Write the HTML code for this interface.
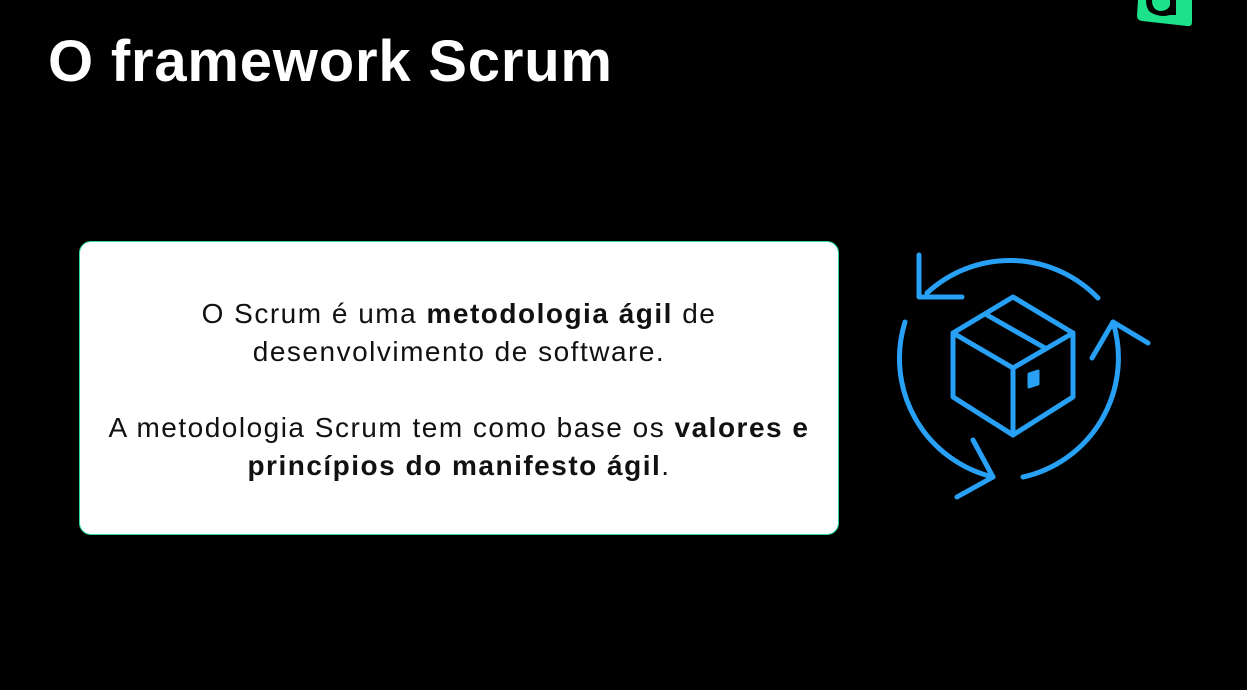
<!DOCTYPE html>
<html><head><meta charset="utf-8"><style>
html,body{margin:0;padding:0;background:#000;width:1247px;height:690px;overflow:hidden;position:relative;font-family:"Liberation Sans",sans-serif}
h1{position:absolute;left:48px;top:28px;margin:0;color:#fff;font-size:58px;font-weight:bold;letter-spacing:0.8px}
.box{position:absolute;left:79px;top:241px;width:760px;height:294px;background:#fff;border:1.5px solid #2fd9a0;border-radius:12px;box-sizing:border-box}
.t{position:absolute;left:0;width:100%;text-align:center;color:#111;font-size:28px;line-height:38px;letter-spacing:1.5px}
b{font-weight:bold}
</style></head><body>
<h1>O framework Scrum</h1>
<svg style="position:absolute;left:1130px;top:0" width="70" height="30" viewBox="0 0 70 30">
<path d="M8 0 L62 0 L62 22 Q62 27 57 26 L12 21 Q7 20 7 16 Z" fill="#1de28a"/>
<path d="M22 0 Q22 10 30 11 Q38 11 40 5 L40 0 L46 0 L46 15 L40 15 Q30 18 20 12 Q16 8 16 0 Z" fill="#000"/>
</svg>
<div class="box">
<div class="t" style="top:53px">O Scrum é uma <b>metodologia ágil</b> de<br>desenvolvimento de software.</div>
<div class="t" style="top:167px">A metodologia Scrum tem como base os <b>valores e<br>princípios do manifesto ágil</b>.</div>
</div>
<svg style="position:absolute;left:0;top:0" width="1247" height="690" fill="none" stroke="#27a0f5" stroke-width="5" stroke-linecap="round" stroke-linejoin="round">
<path d="M927 293 A122 122 0 0 1 1098 298"/>
<path d="M919 255 L919 297 L962 297"/>
<path d="M1113 322 A122 122 0 0 1 1023 477"/>
<path d="M1092 358 L1113 322 L1148 343"/>
<path d="M905 322 A122 122 0 0 0 993 477"/>
<path d="M973 440 L993 477 L957 497"/>
<path d="M1013 297 L953 333 L953 397 L1013 435 L1073 397 L1073 333 Z"/>
<path d="M953 333 L1013 368 L1073 333 M1013 368 L1013 435"/>
<path d="M987 315 L1045 348"/>
<path d="M1029 374 L1038 371 L1038 384 L1029 387 Z" stroke-width="3" fill="#27a0f5"/>
</svg>
</body></html>
